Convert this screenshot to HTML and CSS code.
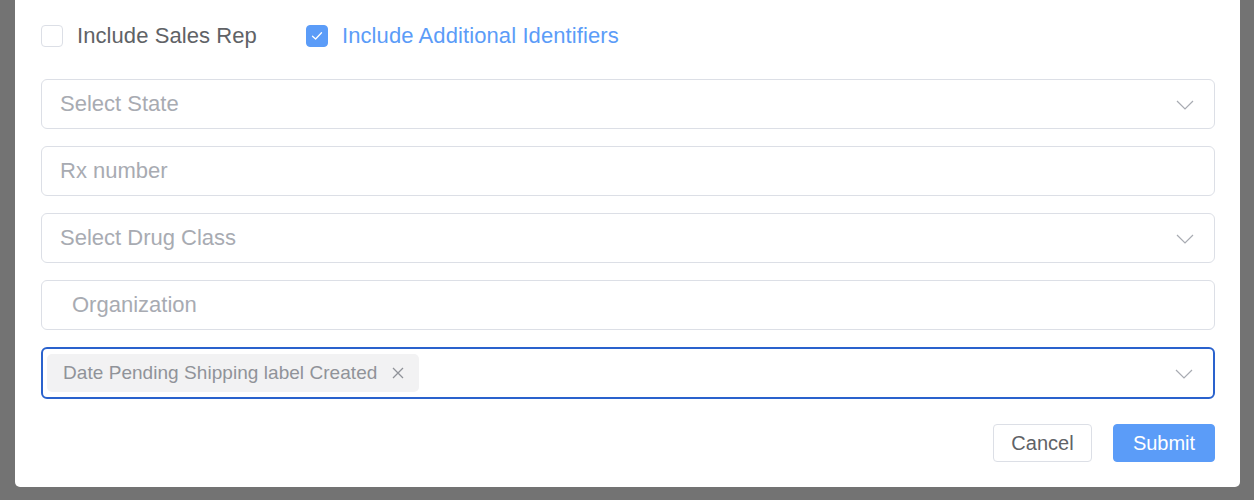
FILE: index.html
```html
<!DOCTYPE html>
<html>
<head>
<meta charset="utf-8">
<link rel="stylesheet" href="styles.css">
</head>
<body>
<div class="modal">
  <div class="checks">
    <label class="check">
      <span class="box"></span>
      <span class="check-label">Include Sales Rep</span>
    </label>
    <label class="check checked">
      <span class="box">
        <svg width="12" height="10" viewBox="0 0 12 10"><path d="M1.5 5.2 L4.6 8 L10.5 1.8" fill="none" stroke="#fff" stroke-width="1.3" stroke-linecap="round" stroke-linejoin="round"/></svg>
      </span>
      <span class="check-label">Include Additional Identifiers</span>
    </label>
  </div>

  <div class="fields">
    <div class="field select">
      <span class="placeholder">Select State</span>
      <svg class="chev" width="18" height="10" viewBox="0 0 18 10"><path d="M1 1 L9 9 L17 1" fill="none" stroke="#a8abb2" stroke-width="1.2"/></svg>
    </div>
    <div class="field">
      <span class="placeholder">Rx number</span>
    </div>
    <div class="field select">
      <span class="placeholder">Select Drug Class</span>
      <svg class="chev" width="18" height="10" viewBox="0 0 18 10"><path d="M1 1 L9 9 L17 1" fill="none" stroke="#a8abb2" stroke-width="1.2"/></svg>
    </div>
    <div class="field indent">
      <span class="placeholder">Organization</span>
    </div>
    <div class="field select focused">
      <span class="tag">Date Pending Shipping label Created
        <svg class="close" width="12" height="12" viewBox="0 0 12 12"><path d="M1 1 L11 11 M11 1 L1 11" fill="none" stroke="#909399" stroke-width="1.3"/></svg>
      </span>
      <svg class="chev" width="18" height="10" viewBox="0 0 18 10"><path d="M1 1 L9 9 L17 1" fill="none" stroke="#a8abb2" stroke-width="1.2"/></svg>
    </div>
  </div>

  <div class="actions">
    <button class="btn cancel">Cancel</button>
    <button class="btn submit">Submit</button>
  </div>
</div>
</body>
</html>
```

FILE: styles.css
```css
html, body {
  margin: 0;
  padding: 0;
}
body {
  background: #737373;
  width: 1254px;
  height: 500px;
  overflow: hidden;
  font-family: "Liberation Sans", Arial, sans-serif;
}
.modal {
  margin-left: 15px;
  width: 1225px;
  height: 487px;
  background: #fff;
  border-radius: 0 0 5px 5px;
  box-sizing: border-box;
  padding: 25px 25px 0 26px;
}
.checks {
  display: flex;
  gap: 49px;
  height: 22px;
  align-items: center;
}
.check {
  display: flex;
  align-items: center;
  gap: 14px;
}
.box {
  width: 20px;
  height: 20px;
  border: 1px solid #dcdfe6;
  border-radius: 4px;
  background: #fff;
  display: flex;
  align-items: center;
  justify-content: center;
}
.checked .box {
  background: #5b9cf8;
  border-color: #5b9cf8;
}
.check-label {
  font-size: 22px;
  color: #606266;
  line-height: 22px;
  letter-spacing: 0.08px;
}
.checked .check-label {
  color: #5b9cf8;
  letter-spacing: 0.1px;
}
.fields {
  margin-top: 32px;
  display: flex;
  flex-direction: column;
  gap: 17px;
}
.field {
  height: 50px;
  box-sizing: border-box;
  border: 1px solid #dcdfe6;
  border-radius: 6px;
  display: flex;
  align-items: center;
  padding: 0 20px 0 18px;
}
.field.indent {
  padding-left: 30px;
}
.placeholder {
  font-size: 22px;
  color: #a8abb2;
  flex: 1;
  margin-top: -1px;
}
.chev {
  margin-left: auto;
  margin-top: 1px;
}
.field.focused {
  height: 52px;
  border: 2px solid #2a62cd;
  padding-left: 4px;
}
.tag {
  height: 38px;
  background: #f2f2f3;
  border-radius: 5px;
  display: flex;
  align-items: center;
  padding: 0 15px 0 16px;
  font-size: 19px;
  letter-spacing: 0.05px;
  color: #909399;
  gap: 15px;
}
.actions {
  margin-top: 25px;
  display: flex;
  justify-content: flex-end;
  gap: 21px;
}
.btn {
  height: 38px;
  font-family: "Liberation Sans", Arial, sans-serif;
  font-size: 20px;
  border-radius: 4px;
  cursor: pointer;
  padding: 0;
}
.cancel {
  width: 99px;
  background: #fff;
  border: 1px solid #dcdfe6;
  color: #606266;
}
.submit {
  width: 102px;
  background: #5b9cf8;
  border: 1px solid #5b9cf8;
  color: #fff;
}
```
